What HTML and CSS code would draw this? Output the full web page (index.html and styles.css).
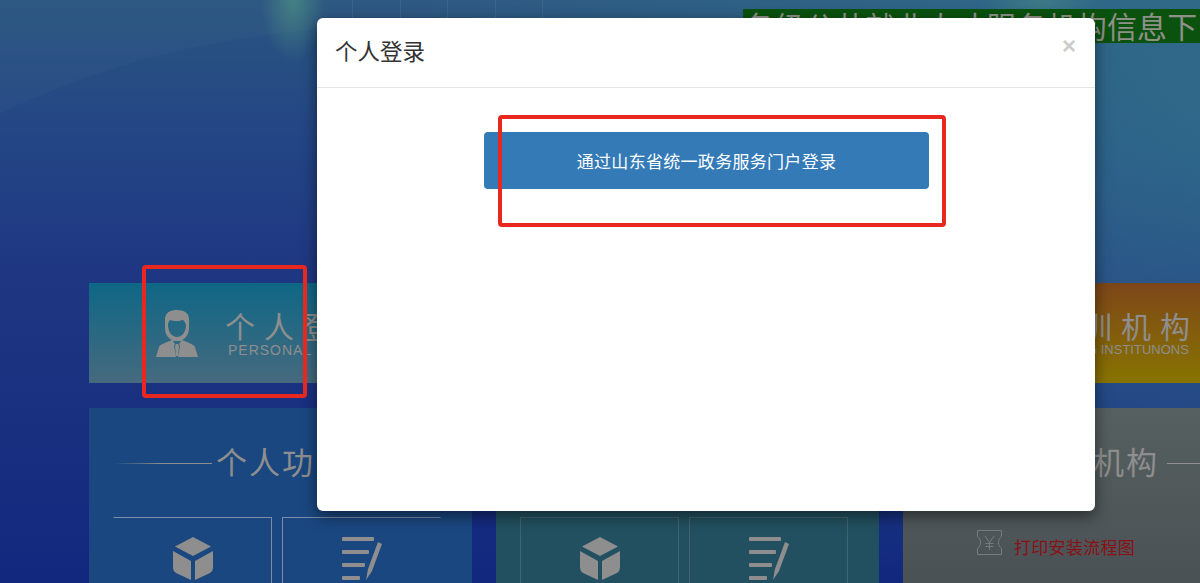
FILE: index.html
```html
<!DOCTYPE html>
<html lang="zh-CN">
<head>
    <meta charset="UTF-8">
    <meta name="viewport" content="width=device-width, initial-scale=1.0">
    <title>个人登录</title>
    <link rel="stylesheet" href="styles.css">
</head>
<body>

    <!-- header -->
    <header class="top">
        <div class="top-nav">
            <span class="top-nav-item"></span>
            <span class="top-nav-item"></span>
            <span class="top-nav-item"></span>
            <span class="top-nav-item"></span>
            <span class="top-nav-item"></span>
        </div>
        <div class="notice">各级公共就业人才服务机构信息下</div>
    </header>

    <!-- login tabs -->
    <section class="tabs">
        <div class="tab tab-person">
            <svg class="tab-icon" viewBox="0 0 42 47">
                <path fill-rule="evenodd" d="M9 8C10 2 15 0 21 0c7 0 12 3 12 9v9c0 6-3 10-7 12v1H16v-1C12 28 9 24 9 18ZM12 15c0 7 4 12 9 12s9-5 9-12c-1-3-2-5-4-5-4 2-9 1-12 0-1 1-2 3-2 5Z"/>
                <path d="M0 47 3 37C4 34 12 32 16 30l3 4-1 2 2 11H1ZM42 47 39 37C38 34 30 32 26 30l-3 4 1 2-2 11h19ZM20 34h2l1 2-1 10h-2l-1-10Z"/>
            </svg>
            <div class="tab-text">
                <div class="tab-title">个人登录</div>
                <div class="tab-sub">PERSONAL</div>
            </div>
        </div>
        <div class="tab tab-unit"></div>
        <div class="tab tab-train">
            <div class="tab-text">
                <div class="tab-title">培训机构</div>
                <div class="tab-sub">TRAINING INSTITUNONS</div>
            </div>
        </div>
    </section>

    <!-- function panels -->
    <section class="panels">
        <div class="panel panel-person">
            <div class="panel-title">
                <span class="panel-line panel-line-in"></span>
                <h2 class="panel-name">个人功能</h2>
            </div>
            <div class="cards">
                <div class="card card-a">
                    <svg class="cube" viewBox="0 0 40 44"><use href="#cube-shape"/></svg>
                </div>
                <div class="card card-b">
                    <svg class="pen" viewBox="0 0 40 46"><use href="#pen-shape"/></svg>
                </div>
            </div>
        </div>
        <div class="panel panel-unit">
            <div class="panel-title"></div>
            <div class="cards">
                <div class="card">
                    <svg class="cube" viewBox="0 0 40 44"><use href="#cube-shape"/></svg>
                </div>
                <div class="card">
                    <svg class="pen" viewBox="0 0 40 46"><use href="#pen-shape"/></svg>
                </div>
            </div>
        </div>
        <div class="panel panel-train">
            <div class="panel-title">
                <span class="panel-line panel-line-in"></span>
                <h2 class="panel-name">培训机构</h2>
                <span class="panel-line panel-line-out"></span>
            </div>
            <div class="print-row">
                <svg class="ticket" viewBox="0 0 25 25">
                    <path d="M.5.5h24v6c-2 1.500-3 3.500-3 6s1 4.500 3 6v6H.5v-6c2-1.500 3-3.500 3-6s-1-4.500-3-6Z"/>
                    <path d="M8 6l4.500 6.500L17 6M12.500 12.500V20M8.500 13.500h8M8.500 16.500h8"/>
                </svg>
                <a class="print-link">打印安装流程图</a>
            </div>
        </div>
    </section>

    <!-- shared icon shapes -->
    <svg class="defs">
        <defs>
            <g id="cube-shape">
                <path d="M20 0 38 9.500 20 19 2 9.500Z"/>
                <path d="M0 14 18 24V43L3 36Q0 34 0 31ZM40 14 22 24V43L37 36Q40 34 40 31Z"/>
            </g>
            <g id="pen-shape">
                <rect x="0" y="0" width="32" height="4" rx="1"/>
                <rect x="0" y="13" width="27" height="4" rx="1"/>
                <rect x="0" y="26" width="23" height="4" rx="1"/>
                <rect x="0" y="39" width="18" height="4" rx="1"/>
                <path d="M36 5 40 7 30 34 24 43 26 32Z"/>
            </g>
        </defs>
    </svg>

    <!-- login dialog -->
    <div class="modal">
        <div class="modal-header">
            <h4 class="modal-title">个人登录</h4>
            <span class="modal-close">×</span>
        </div>
        <div class="modal-body">
            <a class="login-btn">通过山东省统一政务服务门户登录</a>
        </div>
    </div>

    <!-- red marks on the screenshot -->
    <div class="mark mark-tab"></div>
    <div class="mark mark-btn"></div>

</body>
</html>
```

FILE: styles.css
```css
html, body {
    height: 583px;
    overflow: hidden;
}

body {
    margin: 0;
    position: relative;
    font-family: "Noto Sans CJK SC", "Liberation Sans", sans-serif;
    color: #8e8e8e;
    background:
        radial-gradient(ellipse 32px 62px at 293px 0, rgba(90, 170, 130, 0.5), rgba(90, 170, 130, 0)),
        radial-gradient(ellipse 60px 30px at 1040px 0, rgba(90, 170, 130, 0.3), rgba(90, 170, 130, 0)),
        radial-gradient(ellipse 640px 400px at 400px 425px, rgba(255, 255, 255, 0) 99.6%, rgba(255, 255, 255, 0.02) 100%),
        radial-gradient(ellipse 850px 520px at 1250px 100px, rgba(44, 108, 136, 0.85), rgba(44, 108, 136, 0)),
        linear-gradient(to bottom, #2a5680 0, #234585 140px, #1f3682 280px, #12287e 583px);
}

/* header */
.top {
    display: flex;
    height: 283px;
}

.top-nav {
    display: flex;
    margin-left: 352px;
    height: 18px;
}

.top-nav-item {
    width: 47.500px;
    border-left: 1px solid rgba(255, 255, 255, 0.07);
    box-sizing: border-box;
}

.notice {
    flex: 0 0 457px;
    margin: 9px 0 0 153px;
    height: 34px;
    padding-left: 2px;
    box-sizing: border-box;
    overflow: hidden;
    white-space: nowrap;
    font-size: 30px;
    line-height: 33px;
    letter-spacing: 0.200px;
    color: #8f9088;
    background: #0a520e;
}

/* tabs */
.tabs {
    display: grid;
    grid-template-columns: repeat(3, 383px);
    column-gap: 24px;
    margin-left: 89px;
    height: 100px;
}

.tab {
    display: flex;
    align-items: center;
}

.tab-person {
    padding-left: 67px;
    background: linear-gradient(to bottom, #0e6786, #466a7e);
}

.tab-unit {
    background: linear-gradient(to bottom, #0e6f6c, #4f7a58);
}

.tab-train {
    padding-left: 140px;
    background: linear-gradient(to bottom, #7d4619, #887400);
}

.tab-icon {
    width: 42px;
    height: 47px;
    margin-right: 27px;
    fill: #8e8e8e;
    flex: none;
}

.tab-text {
    white-space: nowrap;
}

.tab-title {
    font-size: 30px;
    line-height: 34px;
    letter-spacing: 9px;
}

.tab-sub {
    font-family: "Liberation Sans", sans-serif;
    font-size: 14px;
    line-height: 16px;
    letter-spacing: 1px;
    padding-left: 3px;
}

.tab-train .tab-sub {
    margin-left: -11px;
    font-size: 13px;
    letter-spacing: 0;
}

/* panels */
.panels {
    display: grid;
    grid-template-columns: repeat(3, 383px);
    column-gap: 24px;
    margin: 25px 0 0 89px;
}

.panel {
    height: 260px;
    padding: 32px 24px 0;
    box-sizing: border-box;
}

.panel-person {
    background: #1a4780;
}

.panel-unit {
    background: #225060;
}

.panel-train {
    padding-left: 21px;
    background: linear-gradient(to bottom, #566060, #454a50);
}

.panel-title {
    display: flex;
    align-items: center;
    height: 46px;
    white-space: nowrap;
}

.panel-name {
    margin: -4px 0 0;
    font-size: 31px;
    font-weight: normal;
    line-height: 46px;
    letter-spacing: 2px;
}

.panel-line {
    flex: none;
    width: 99px;
    height: 1px;
}

.panel-line-in {
    margin-right: 4px;
    background: linear-gradient(to right, rgba(142, 142, 142, 0), #8e8e8e 50%);
}

.panel-line-out {
    margin-left: 8px;
    background: #8e8e8e;
}

.cards {
    display: flex;
    gap: 10px;
    margin-top: 31px;
}

.card {
    display: flex;
    justify-content: center;
    box-sizing: border-box;
    width: 159px;
    height: 140px;
    padding-top: 19px;
    border: 1px solid rgba(142, 142, 142, 0.3);
}

.card-a {
    border-color: #7a8ca8;
    border-left-color: transparent;
    border-bottom: 0;
}

.card-b {
    border-color: #7a8ca8;
    border-right-color: transparent;
    border-bottom: 0;
}

.cube {
    width: 40px;
    height: 44px;
    fill: #8e8e8e;
}

.pen {
    width: 40px;
    height: 46px;
    fill: #8e8e8e;
}

.print-row {
    display: flex;
    align-items: center;
    margin: 44px 0 0 53px;
}

.ticket {
    flex: none;
    width: 25px;
    height: 25px;
    margin-right: 12px;
    fill: none;
    stroke: #767c80;
    stroke-width: 1;
}

.print-link {
    font-size: 17px;
    line-height: 25px;
    letter-spacing: 0.300px;
    color: #8a1016;
    position: relative;
    top: 4px;
}

.defs {
    position: absolute;
    width: 0;
    height: 0;
}

/* dialog */
.modal {
    position: absolute;
    left: 317px;
    top: 18px;
    width: 778px;
    height: 493px;
    background: #fff;
    border-radius: 6px;
    box-shadow: 0 5px 15px rgba(0, 0, 0, 0.5);
}

.modal-header {
    display: flex;
    justify-content: space-between;
    height: 69px;
    padding: 0 19px 0 18px;
    border-bottom: 1px solid #e5e5e5;
}

.modal-title {
    margin: 0;
    font-size: 22.500px;
    font-weight: normal;
    line-height: 65px;
    color: #333;
}

.modal-close {
    margin: 14px 0 0 0;
    font-family: "Liberation Sans", sans-serif;
    font-size: 24px;
    font-weight: bold;
    line-height: 28px;
    color: #ccc;
}

.modal-body {
    display: flex;
    justify-content: center;
    padding: 44px 0 0 1px;
}

.login-btn {
    width: 445px;
    height: 57px;
    border-radius: 4px;
    background: #337ab7;
    color: #fff;
    font-size: 17px;
    letter-spacing: 0.300px;
    line-height: 57px;
    text-align: center;
}

/* red marks */
.mark {
    position: absolute;
    box-sizing: border-box;
    border: 4px solid #e8281f;
    border-radius: 4px;
}

.mark-tab {
    left: 142px;
    top: 265px;
    width: 165px;
    height: 133px;
}

.mark-btn {
    left: 498px;
    top: 115px;
    width: 448px;
    height: 112px;
}
```
